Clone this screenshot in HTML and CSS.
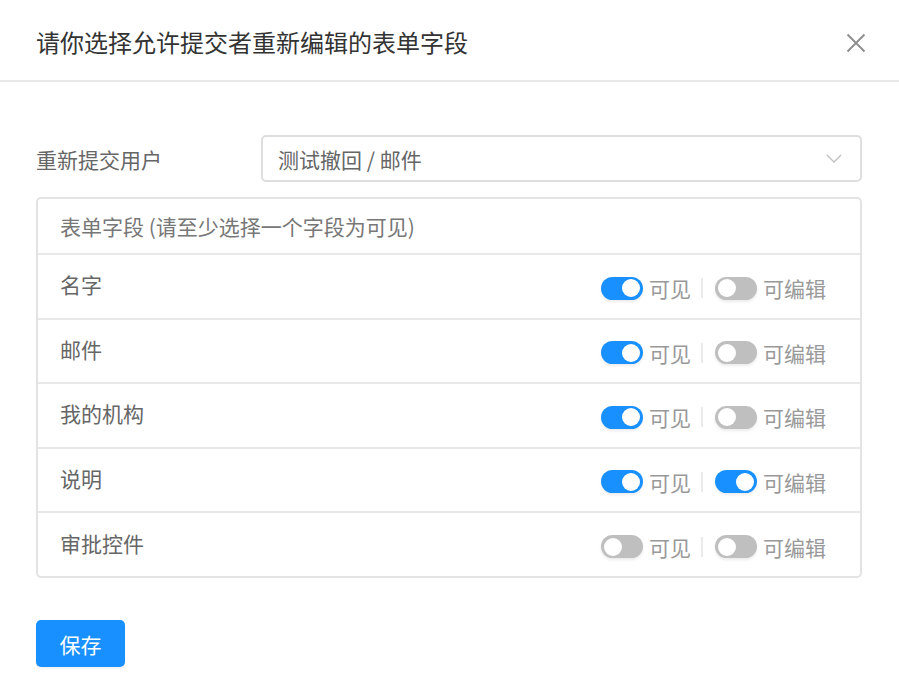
FILE: index.html
```html
<!DOCTYPE html>
<html lang="zh">
<head>
<meta charset="utf-8">
<link rel="stylesheet" href="styles.css">
</head>
<body>
<div class="dialog">
  <div class="header">
    <div class="title">请你选择允许提交者重新编辑的表单字段</div>
    <svg class="close" width="20" height="20" viewBox="0 0 20 20"><path d="M1.5 1.5 L18.5 18.5 M18.5 1.5 L1.5 18.5" stroke="#8c8c8c" stroke-width="1.8" fill="none"/></svg>
  </div>
  <div class="body">
    <div class="form-row">
      <div class="label">重新提交用户</div>
      <div class="select">
        <span>测试撤回 / 邮件</span>
        <svg class="arrow" width="16" height="10" viewBox="0 0 16 10"><path d="M1 1 L8 8 L15 1" stroke="#bfbfbf" stroke-width="1.3" fill="none"/></svg>
      </div>
    </div>
    <div class="table">
      <div class="thead">表单字段 (请至少选择一个字段为可见)</div>
      <div class="row">
        <div class="name">名字</div>
        <div class="controls">
          <span class="switch on"></span><span class="ctext">可见</span><span class="sep"></span>
          <span class="switch"></span><span class="ctext">可编辑</span>
        </div>
      </div>
      <div class="row">
        <div class="name">邮件</div>
        <div class="controls">
          <span class="switch on"></span><span class="ctext">可见</span><span class="sep"></span>
          <span class="switch"></span><span class="ctext">可编辑</span>
        </div>
      </div>
      <div class="row">
        <div class="name">我的机构</div>
        <div class="controls">
          <span class="switch on"></span><span class="ctext">可见</span><span class="sep"></span>
          <span class="switch"></span><span class="ctext">可编辑</span>
        </div>
      </div>
      <div class="row">
        <div class="name">说明</div>
        <div class="controls">
          <span class="switch on"></span><span class="ctext">可见</span><span class="sep"></span>
          <span class="switch on"></span><span class="ctext">可编辑</span>
        </div>
      </div>
      <div class="row last">
        <div class="name">审批控件</div>
        <div class="controls">
          <span class="switch"></span><span class="ctext">可见</span><span class="sep"></span>
          <span class="switch"></span><span class="ctext">可编辑</span>
        </div>
      </div>
    </div>
    <button class="save">保存</button>
  </div>
</div>
</body>
</html>
```

FILE: styles.css
```css
* { box-sizing: border-box; }
html, body {
  margin: 0;
  padding: 0;
  background: #fff;
  font-family: "Noto Sans CJK SC", "Noto Sans", sans-serif;
}
.dialog {
  width: 899px;
  height: 682px;
  overflow: hidden;
}
.header {
  height: 82px;
  border-bottom: 2px solid #e8e8e8;
  display: flex;
  align-items: center;
  justify-content: space-between;
  padding: 0 33px 0 36px;
}
.title {
  font-size: 24px;
  color: #333;
  line-height: 30px;
  margin-top: 4px;
}
.close {
  margin-top: 5px;
}
.body {
  padding: 53px 37px 0 36px;
}
.form-row {
  display: flex;
  align-items: center;
  height: 47px;
}
.label {
  width: 225px;
  font-size: 21px;
  color: #666;
}
.select {
  flex: 1;
  height: 47px;
  border: 2px solid #dedede;
  border-radius: 5px;
  display: flex;
  align-items: center;
  justify-content: space-between;
  padding: 0 18px 0 15px;
  font-size: 21px;
  color: #666;
}
.table {
  margin-top: 15px;
  border: 2px solid #e3e3e3;
  border-radius: 5px;
}
.thead {
  height: 56px;
  display: flex;
  align-items: center;
  padding-left: 22px;
  font-size: 21px;
  color: #777;
  border-bottom: 2px solid #e8e8e8;
}
.row {
  height: 64.5px;
  display: flex;
  align-items: center;
  justify-content: space-between;
  padding: 0 34px 0 22px;
  border-bottom: 2px solid #e8e8e8;
}
.row.last {
  height: 63px;
  border-bottom: none;
}
.name {
  font-size: 21px;
  color: #666;
  margin-top: -4px;
}
.controls {
  display: flex;
  align-items: center;
  margin-top: 4px;
}
.switch {
  position: relative;
  width: 42px;
  height: 23px;
  border-radius: 12px;
  background: #bfbfbf;
  box-shadow: 0 2px 3px rgba(0,0,0,0.08);
}
.switch::after {
  content: "";
  position: absolute;
  top: 2.5px;
  left: 3px;
  width: 18px;
  height: 18px;
  border-radius: 50%;
  background: #fff;
}
.switch.on { background: #1890ff; }
.switch.on::after { left: 21px; }
.ctext {
  font-size: 21px;
  color: #999;
  margin-left: 6px;
}
.sep {
  width: 2px;
  height: 20px;
  background: #eaeaea;
  margin: 0 12px 0 10px;
}
.save {
  margin-top: 42px;
  width: 89px;
  height: 47px;
  border: none;
  border-radius: 5px;
  background: #1890ff;
  color: #fff;
  font-family: "Noto Sans CJK SC", sans-serif;
  font-size: 21px;
  box-shadow: 0 2px 2px rgba(0,0,0,0.05);
  padding: 0;
}
```
